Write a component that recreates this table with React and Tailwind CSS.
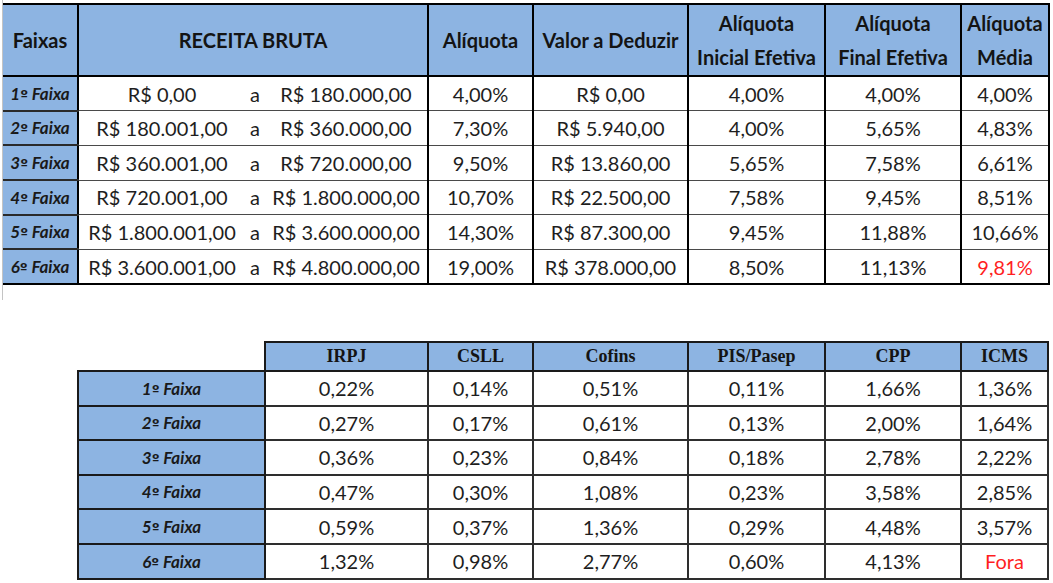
const faixas = [
  { de: "R$ 0,00", ate: "R$ 180.000,00", aliq: "4,00%", deduzir: "R$ 0,00", ini: "4,00%", fim: "4,00%", media: "4,00%" },
  { de: "R$ 180.001,00", ate: "R$ 360.000,00", aliq: "7,30%", deduzir: "R$ 5.940,00", ini: "4,00%", fim: "5,65%", media: "4,83%" },
  { de: "R$ 360.001,00", ate: "R$ 720.000,00", aliq: "9,50%", deduzir: "R$ 13.860,00", ini: "5,65%", fim: "7,58%", media: "6,61%" },
  { de: "R$ 720.001,00", ate: "R$ 1.800.000,00", aliq: "10,70%", deduzir: "R$ 22.500,00", ini: "7,58%", fim: "9,45%", media: "8,51%" },
  { de: "R$ 1.800.001,00", ate: "R$ 3.600.000,00", aliq: "14,30%", deduzir: "R$ 87.300,00", ini: "9,45%", fim: "11,88%", media: "10,66%" },
  { de: "R$ 3.600.001,00", ate: "R$ 4.800.000,00", aliq: "19,00%", deduzir: "R$ 378.000,00", ini: "8,50%", fim: "11,13%", media: "9,81%", red: true },
];

const tributos = [
  ["0,22%", "0,14%", "0,51%", "0,11%", "1,66%", "1,36%"],
  ["0,27%", "0,17%", "0,61%", "0,13%", "2,00%", "1,64%"],
  ["0,36%", "0,23%", "0,84%", "0,18%", "2,78%", "2,22%"],
  ["0,47%", "0,30%", "1,08%", "0,23%", "3,58%", "2,85%"],
  ["0,59%", "0,37%", "1,36%", "0,29%", "4,48%", "3,57%"],
  ["1,32%", "0,98%", "2,77%", "0,60%", "4,13%", "Fora"],
];

const headerCell = "border-2 border-black bg-[#8db4e2] font-bold text-[20px] leading-[34px] text-[#141414] text-center p-0";
const dataCell = "border-x-2 border-x-black border-b border-b-[#4a4a4a] text-center p-0 text-[20px] text-[#1e1e1e]";
const labelCell = "border-x-2 border-x-black border-b-2 border-b-[#2a2a2a] bg-[#8db4e2] text-center p-0 text-[17px] font-bold italic text-[#1a1a1a]";

// "1º Faixa" com o º sublinhado, como no Excel
const Faixa = ({ n }) => (
  <>
    {n}
    <span className="font-['DejaVu_Sans',sans-serif] text-[14px] not-italic">º</span> Faixa
  </>
);

const App = () => {
  return (
    <div className="w-[1053px] h-[583px] bg-white overflow-hidden font-[Lato,sans-serif]">
      {/* tabela principal */}
      <div className="ml-[2px] h-[300px] border-l border-[#c4c4c4] pt-[3px]">
        <table className="table-fixed border-collapse w-[1046px]">
          <colgroup>
            <col className="w-[75px]" />
            <col className="w-[350px]" />
            <col className="w-[105px]" />
            <col className="w-[155px]" />
            <col className="w-[137px]" />
            <col className="w-[136px]" />
            <col className="w-[88px]" />
          </colgroup>
          <thead>
            <tr className="h-[72px]">
              <th className={headerCell + " border-l-0"}>Faixas</th>
              <th className={headerCell}>RECEITA BRUTA</th>
              <th className={headerCell}>Alíquota</th>
              <th className={headerCell}>Valor a Deduzir</th>
              <th className={headerCell}>
                Alíquota
                <br />
                Inicial Efetiva
              </th>
              <th className={headerCell}>
                Alíquota
                <br />
                Final Efetiva
              </th>
              <th className={headerCell}>
                Alíquota
                <br />
                Média
              </th>
            </tr>
          </thead>
          <tbody>
            {faixas.map((f, i) => {
              const last = i === 5 ? " border-b-2 border-b-black" : "";
              return (
                <tr key={i} className="h-[34.7px]">
                  <td className={labelCell + " border-l-0" + (i === 5 ? " border-b-black" : "")}>
                    <Faixa n={i + 1} />
                  </td>
                  <td className={dataCell + last}>
                    <div className="flex items-center">
                      <span className="w-[166px] text-center">{f.de}</span>
                      <span className="w-[20px] text-center">a</span>
                      <span className="flex-1 text-center">{f.ate}</span>
                    </div>
                  </td>
                  <td className={dataCell + last}>{f.aliq}</td>
                  <td className={dataCell + last}>{f.deduzir}</td>
                  <td className={dataCell + last}>{f.ini}</td>
                  <td className={dataCell + last}>{f.fim}</td>
                  <td className={dataCell + last + (f.red ? " text-[#ff1f1f]" : "")}>{f.media}</td>
                </tr>
              );
            })}
          </tbody>
        </table>
      </div>

      {/* tributos por faixa */}
      <div className="mt-[41px] ml-[77px]">
        <table className="table-fixed border-collapse w-[970px]">
          <colgroup>
            <col className="w-[187px]" />
            <col className="w-[163px]" />
            <col className="w-[105px]" />
            <col className="w-[155px]" />
            <col className="w-[137px]" />
            <col className="w-[136px]" />
            <col className="w-[87px]" />
          </colgroup>
          <thead>
            <tr className="h-[29px]">
              <th className="p-0"></th>
              {["IRPJ", "CSLL", "Cofins", "PIS/Pasep", "CPP", "ICMS"].map((h) => (
                <th
                  key={h}
                  className="border-2 border-[#1a1a1a] bg-[#8db4e2] p-0 text-center font-['Liberation_Serif',serif] font-bold text-[18px] text-[#141414]"
                >
                  {h}
                </th>
              ))}
            </tr>
          </thead>
          <tbody>
            {tributos.map((row, i) => (
              <tr key={i} className="h-[34.6px]">
                <td className="border-2 border-[#1a1a1a] bg-[#8db4e2] p-0 text-center text-[17px] font-bold italic text-[#1a1a1a]">
                  <Faixa n={i + 1} />
                </td>
                {row.map((v, j) => (
                  <td
                    key={j}
                    className={
                      "border-2 border-[#2e2e2e] p-0 text-center text-[20px] " +
                      (v === "Fora" ? "text-[#ff1f1f]" : "text-[#1e1e1e]")
                    }
                  >
                    {v}
                  </td>
                ))}
              </tr>
            ))}
          </tbody>
        </table>
      </div>
    </div>
  );
};

export default App;
